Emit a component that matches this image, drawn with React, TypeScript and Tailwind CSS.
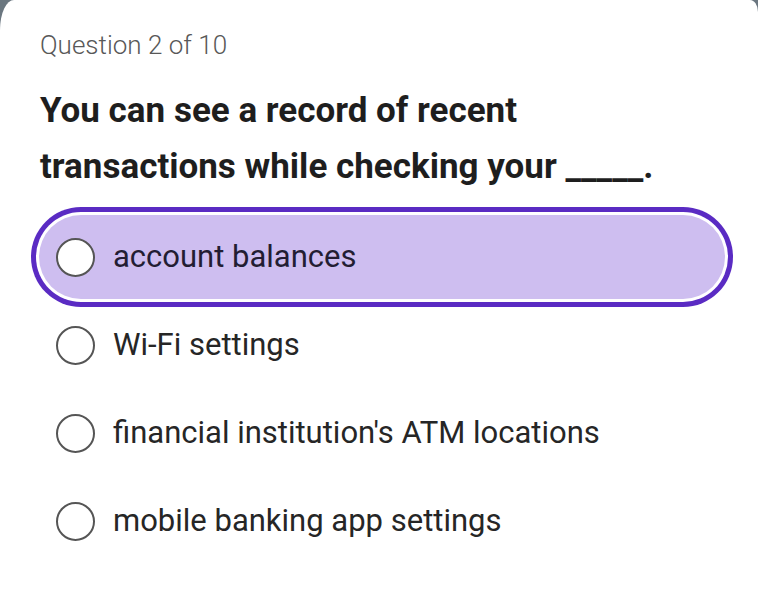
import React from "react";

const options = [
  "account balances",
  "Wi-Fi settings",
  "financial institution's ATM locations",
  "mobile banking app settings",
];

export default function App() {
  return (
    <div className="w-[758px] h-[592px] bg-[#6b7780] overflow-hidden">
      <div
        className="w-full h-full bg-white rounded-tl-[14px_30px] rounded-tr-[8px_12px] pt-[30px]"
        style={{ fontFamily: "Roboto, 'Liberation Sans', sans-serif" }}
      >
        <div className="pl-[40px] text-[26px] leading-[30px] text-[#585858] font-light">
          Question 2 of 10
        </div>
        <h1 className="ml-[40px] w-[650px] mt-[23px] text-[35px] leading-[56px] font-bold text-[#1e1e1e]">
          You can see a record of recent transactions while checking your _____.
        </h1>
        <div className="mt-[20px] ml-[39px] mr-[33px] flex flex-col gap-[4px]">
          {options.map((o, i) => (
            <div
              key={o}
              className={
                "h-[84px] flex items-center pl-[17px] rounded-full " +
                (i === 0
                  ? "bg-[#cebef0] shadow-[0_0_0_3px_#ffffff,0_0_0_8px_#5a2bc3]"
                  : "")
              }
            >
              <span className="w-[39px] h-[39px] rounded-full border-2 border-[#555555] bg-white shrink-0" />
              <span
                className={
                  "ml-[18px] text-[31px] " +
                  (i === 0 ? "text-[#231d33]" : "text-[#262626]")
                }
              >
                {o}
              </span>
            </div>
          ))}
        </div>
      </div>
    </div>
  );
}
